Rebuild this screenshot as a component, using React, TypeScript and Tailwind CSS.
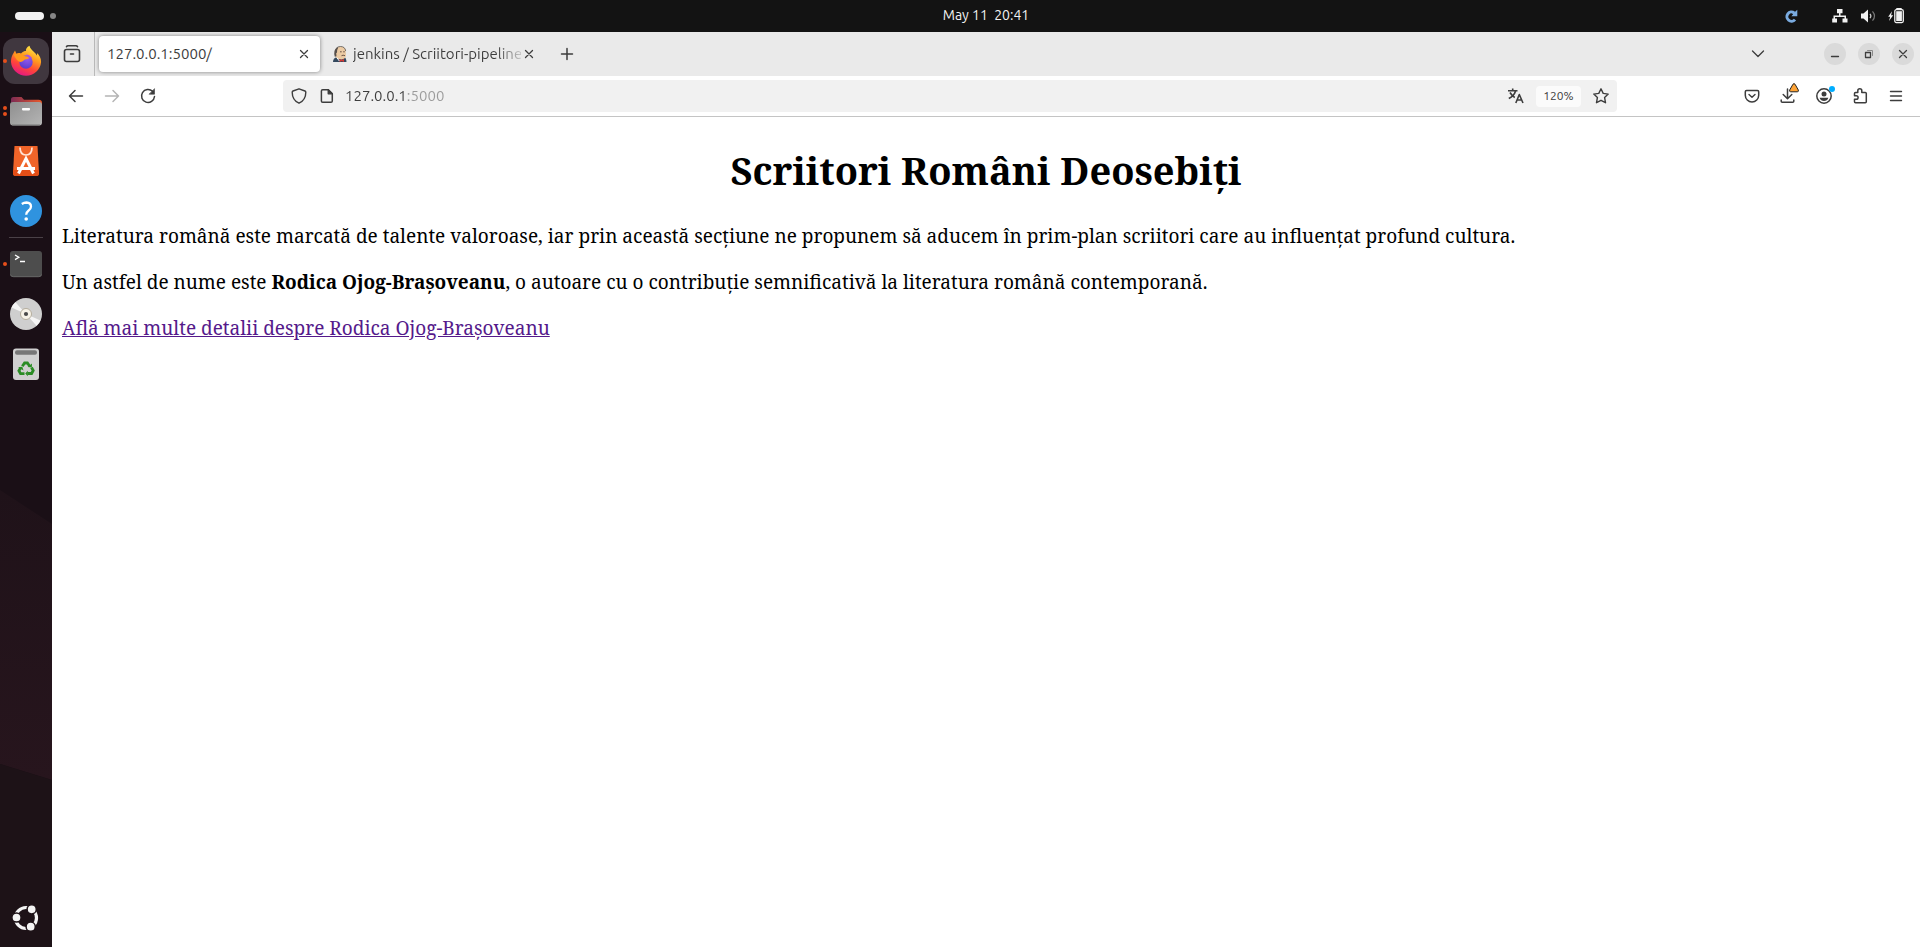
import type { ReactNode } from "react";

const stroke = {
  fill: "none",
  stroke: "currentColor",
  strokeWidth: 1.3,
  strokeLinecap: "round" as const,
  strokeLinejoin: "round" as const,
};

function Icon({ children }: { children: ReactNode }) {
  return (
    <svg viewBox="0 0 16 16" className="size-4 shrink-0" aria-hidden="true" {...stroke}>
      {children}
    </svg>
  );
}

function ToolButton({ label, children, muted = false }: { label: string; children: ReactNode; muted?: boolean }) {
  return (
    <button
      type="button"
      aria-label={label}
      disabled={muted}
      className="flex size-9 shrink-0 items-center justify-center rounded text-[#3d3d3d] disabled:text-[#b4b4b4]"
    >
      {children}
    </button>
  );
}

function TopBar() {
  return (
    <header className="grid h-8 shrink-0 grid-cols-3 items-center bg-[#131313] text-[#f2f2f2]">
      <button type="button" aria-label="Workspaces" className="ml-[15px] flex items-center gap-1.5 justify-self-start">
        <span className="h-2 w-[29px] rounded-full bg-[#f2f2f2]" />
        <span className="size-1.5 rounded-full bg-[#868686]" />
      </button>
      <time className="justify-self-center pb-0.5 pl-[52px] text-[14px] leading-5 whitespace-pre">May 11  20:41</time>
      <div className="flex items-center justify-end pr-4">
        <svg viewBox="0 0 16 16" className="mr-[33px] size-4" aria-hidden="true">
          <path d="M11.2 4.9A4.600 4.600 0 1 0 12 11.600" fill="none" stroke="#7aabe0" strokeWidth="3" />
          <path d="M14.300 1.700v6.600H8.400l1.700-2.100L8.900 4.400l2.900-.3z" fill="#7aabe0" />
        </svg>
        <svg viewBox="0 0 16 16" className="mr-3 size-4" fill="currentColor" aria-hidden="true">
          <path d="M5 1h5.500v4.200H8.500V7.500H14v3h1.500v4h-5v-4h2V9H3v1.500h2v4H.2v-4h1.300v-3H7V5.200H5z" />
        </svg>
        <svg viewBox="0 0 16 16" className="mr-3 size-4" aria-hidden="true">
          <path d="M1 5.500h2.500L8 1.600v12.800l-4.500-3.900H1z" fill="currentColor" />
          <path d="M10 5.800q1.800 2.200 0 4.400" fill="none" stroke="#c9c9c9" strokeWidth="1.2" />
          <path d="M12.500 3.300q4 4.700 0 9.400" fill="none" stroke="#777" strokeWidth="1.2" />
        </svg>
        <svg viewBox="0 0 16 16" className="size-4" aria-hidden="true">
          <path d="M4 3.200.2 8.700h2L1 13l4.200-5.700H3.100z" fill="currentColor" />
          <path d="M9 1.300V.5h4v.8" fill="none" stroke="currentColor" strokeWidth="1.4" />
          <rect x="6.800" y="1.700" width="8.500" height="12.900" rx="1.500" fill="none" stroke="currentColor" strokeWidth="1.3" />
          <rect x="8.200" y="3.200" width="5.700" height="9.900" fill="currentColor" />
        </svg>
      </div>
    </header>
  );
}

function DockItem({ label, dots = 0, active = false, children }: { label: string; dots?: number; active?: boolean; children: ReactNode }) {
  return (
    <div className="relative flex h-[50px] w-full items-center justify-center">
      <span className="absolute left-[3px] flex flex-col gap-0.5">
        {Array.from({ length: dots }, (_, i) => (
          <span key={i} className="size-1 rounded-full bg-[#e64f1b]" />
        ))}
      </span>
      <button
        type="button"
        aria-label={label}
        className={
          active
            ? "flex size-[46px] items-center justify-center rounded-xl bg-[#40373f]"
            : "flex size-[46px] items-center justify-center rounded-xl"
        }
      >
        <svg viewBox="0 0 32 32" className="size-8" aria-hidden="true">
          {children}
        </svg>
      </button>
    </div>
  );
}

function Dock() {
  return (
    <nav
      aria-label="Applications"
      className="relative flex w-[52px] shrink-0 flex-col items-center bg-[#1a0f16] pt-1"
    >
      <svg viewBox="0 0 52 915" preserveAspectRatio="none" className="absolute inset-0 size-full" aria-hidden="true">
        <defs>
          <linearGradient id="wall" x1="0" y1="0" x2="0" y2="1">
            <stop offset="0" stopColor="#1f1219" />
            <stop offset="1" stopColor="#27151d" />
          </linearGradient>
        </defs>
        <path d="M0 458 52 492V748L0 732z" fill="url(#wall)" />
        <path d="M0 732 52 748V915H0z" fill="#1d1217" />
      </svg>
      <DockItem label="Firefox" dots={1} active>
        <defs>
          <linearGradient id="fox" x1=".75" y1="0" x2=".3" y2="1">
            <stop offset="0" stopColor="#fff04a" />
            <stop offset=".38" stopColor="#ff9c1f" />
            <stop offset=".68" stopColor="#ff4638" />
            <stop offset="1" stopColor="#e31587" />
          </linearGradient>
          <radialGradient id="globe" cx=".6" cy=".2" r=".9">
            <stop offset="0" stopColor="#9a5cf0" />
            <stop offset="1" stopColor="#5339c9" />
          </radialGradient>
        </defs>
        <path
          d="M19.500.8c.4 2.600 2.400 4.200 4.500 6.200 1.400 1.400 2.400 2.400 2.700 3.500.6-.6.4-1.700.2-2.400 2.600 2.100 4.200 5.400 4.200 9A15.100 14.800 0 0 1 1 17c-.1-3 .7-5.600 1.700-7.500L5 5.500l1.400 3.200c1.600-.9 3.200-.6 4.600-.2 2-2.200 4.200-2.500 5-2.400-.6-1.600.9-4.200 3.500-5.300z"
          fill="url(#fox)"
        />
        <circle cx="16" cy="17" r="6.700" fill="url(#globe)" />
        <path d="M3.500 9.500c4-1.700 9-.2 12.300 2l4.200.2c-.8 2.400-3 2.300-5.200 2.900-1.500.9-1.700 2.200-4 2.300-3 .1-5.200-3.400-7.300-7.400z" fill="#ff9a1c" />
        <path d="M16 9.500c2.500 0 5 1.500 6.300 4.200-1.200-.8-2.200-1-3.300-.7z" fill="#a64de8" />
      </DockItem>
      <DockItem label="Files" dots={2}>
        <defs>
          <linearGradient id="tab" x1="0" y1="0" x2="1" y2="0">
            <stop offset="0" stopColor="#7b2a55" />
            <stop offset="1" stopColor="#e95a2b" />
          </linearGradient>
          <linearGradient id="files" x1="0" y1="0" x2="1" y2="1">
            <stop offset="0" stopColor="#8f8f8f" />
            <stop offset="1" stopColor="#b5b5b5" />
          </linearGradient>
        </defs>
        <path d="M1 4.500Q1 2 3.500 2h8l2.500 2.800h14.500Q32 4.800 32 8v8H.5z" fill="url(#tab)" />
        <rect y="7" width="32" height="23.500" rx="3" fill="url(#files)" />
        <path d="M2 30h28" stroke="#777" />
        <rect x="12" y="13" width="8" height="2.400" rx=".8" fill="#fff" />
      </DockItem>
      <DockItem label="App Center">
        <path d="M4.500 1h23l1.500 27q0 3-2.500 3h-21Q3 31 3 28z" fill="#f06429" />
        <path d="M3.200 25h25.600l.1 3q0 3-2.400 3h-21Q3 31 3 28z" fill="#e44e17" />
        <path d="M10 2.500q0 7.500 6 7.500t6-7.500" fill="none" stroke="#ffe3d6" strokeWidth="1.700" />
        <path d="m8.500 28.500 7.500-15 7.500 15M7 23.500h18" fill="none" stroke="#fff" strokeWidth="3" />
      </DockItem>
      <DockItem label="Help">
        <circle cx="16" cy="16" r="16" fill="#2f93df" />
        <path d="M11.800 9Q14 7.500 16.500 7.500q4.500.2 4.500 4 0 2.400-2.600 4.200-2.200 1.600-2.200 4" fill="none" stroke="#fff" strokeWidth="2.300" />
        <circle cx="16.200" cy="24" r="1.800" fill="#fff" />
      </DockItem>
      <hr className="relative my-px h-px w-[34px] border-0 bg-[#4a4147]" />
      <DockItem label="Terminal" dots={1}>
        <rect y="3" width="32" height="26" rx="3" fill="#4d4d4d" />
        <path d="M.5 26.500q.5 2.200 3 2.200h25q2.500 0 3-2.200" fill="none" stroke="#666" />
        <path d="m5 7 3.800 2.300L5 11.600M10 13.500h5" fill="none" stroke="#fff" strokeWidth="1.300" />
      </DockItem>
      <DockItem label="Disc">
        <circle cx="16" cy="16" r="16" fill="#cfcfcf" />
        <path d="M16 16 1.500 9.500A16 16 0 0 1 5.500 4.200zM16 16l14.500 6.500a16 16 0 0 1-4 5.300z" fill="#f5f5f5" />
        <circle cx="16" cy="16" r="5.500" fill="#f7f3e8" stroke="#aaa18e" strokeWidth=".8" />
        <circle cx="16" cy="16" r="2.100" fill="#4a4a4a" />
      </DockItem>
      <DockItem label="Trash">
        <rect x="3" y=".5" width="26" height="31.500" rx="3" fill="#d0d0d0" />
        <rect x="5" y="2.300" width="22" height="4.500" rx="2" fill="#777" />
        <g fill="none" stroke="#2a8c24" strokeWidth="2.800">
          <path d="m12.300 18.300 2.300-3.300h2.800l2.300 3.200" />
          <path d="m21.500 19.500 1.700 3-1.600 3h-4.100" />
          <path d="M14.500 25.600h-4L8.900 22.800l1.800-3.100" />
        </g>
        <path d="m17.600 18.900 4.200.5.200-4zM17.800 22.800v5.400l-2.600-2.700zM8 19.300l4.300-.6 1.200 3.800z" fill="#2a8c24" />
      </DockItem>
      <div className="mt-auto w-full pb-1">
        <DockItem label="Show Applications">
          <circle cx="16" cy="16" r="10.500" fill="none" stroke="#f4f4f4" strokeWidth="3.200" />
          <g fill="#f4f4f4" stroke="#1d1217" strokeWidth="1.500">
            <circle cx="21.700" cy="7.300" r="4.600" />
            <circle cx="6.500" cy="15.500" r="4.600" />
            <circle cx="20.700" cy="24.700" r="4.600" />
          </g>
        </DockItem>
      </div>
    </nav>
  );
}

function CloseGlyph() {
  return (
    <svg viewBox="0 0 16 16" className="size-4 shrink-0" aria-hidden="true" {...stroke}>
      <path d="m4.500 4.500 7 7m0-7-7 7" />
    </svg>
  );
}

function ButlerFavicon() {
  return (
    <svg viewBox="0 0 16 16" className="size-4 shrink-0" aria-hidden="true">
      <path d="M1 16q0-4 4-5l6-1q3.500 1.500 3.500 6z" fill="#34495e" />
      <path d="M3 10V5.500Q4 .7 8.500.7 13.300.7 13.800 5l.2 5q-1 3-4.500 3.500L5.500 13z" fill="#eccba4" />
      <path d="M2.800 10.800Q1 4 5 1.500L6.300 1.600Q4.800 4 5 6.500l-.8.8.3 3z" fill="#57504b" />
      <path d="M4.500 2Q6 .5 8.500.5q4.500 0 5.200 4.500" fill="none" stroke="#57504b" strokeWidth=".8" />
      <path d="M8 5.800h1.700m1.500 0h1.600M9.500 9.700q1.500-1 3.500 0" fill="none" stroke="#5a463c" strokeWidth=".9" />
      <path d="m7.500 13 2.200 1L12 13v3l-2.300-.9L7.500 16z" fill="#d33833" />
      <path d="m4.800 11.500 2.500 3.500" stroke="#fff" strokeWidth=".9" />
    </svg>
  );
}

function TabStrip() {
  return (
    <div className="flex h-11 items-center bg-[#eaeaea] pr-1.5 text-[#3d3d3d]">
      <div className="mr-1 flex h-full w-[43px] shrink-0 items-center justify-start border-r border-[#b9b9b9] pl-0.5">
        <button type="button" aria-label="Recent browsing" className="flex size-9 items-center justify-center">
          <svg viewBox="0 0 18 18" className="size-[18px]" aria-hidden="true" {...stroke} strokeWidth={1.600}>
            <path d="M3.500 1.700q.5-.9 1.500-.9h8q1 0 1.500.9" />
            <rect x="1.500" y="4.500" width="15" height="12" rx="2" />
            <path d="M7.500 9h3" />
          </svg>
        </button>
      </div>
      <div className="flex items-center" role="tablist">
        <div role="tab" aria-selected="true" className="flex h-9 w-[221px] items-center rounded bg-white px-2 shadow-[0_0_4px_rgba(0,0,0,0.45)]">
          <span className="flex-1 text-[15px] leading-5">127.0.0.1:5000/</span>
          <button type="button" aria-label="Close tab">
            <CloseGlyph />
          </button>
        </div>
        <div role="tab" aria-selected="false" className="flex h-9 w-[217px] items-center pl-3">
          <ButlerFavicon />
          <span className="ml-[5px] w-[168px] overflow-hidden bg-linear-to-r from-[#3d3d3d] from-85% to-[#3d3d3d]/20 bg-clip-text text-[15px] leading-5 whitespace-nowrap text-transparent">
            jenkins / Scriitori-pipeline
          </span>
          <button type="button" aria-label="Close tab">
            <CloseGlyph />
          </button>
        </div>
      </div>
      <button type="button" aria-label="New tab" className="ml-3 flex size-9 items-center justify-center">
        <Icon>
          <path d="M8 2.500v11M2.500 8h11" strokeWidth="1.500" />
        </Icon>
      </button>
      <div className="ml-auto flex items-center">
        <button type="button" aria-label="List all tabs" className="mr-12 flex size-9 items-center justify-center">
          <Icon>
            <path d="m2.500 5 5.500 5.500L13.500 5" />
          </Icon>
        </button>
        <div className="flex gap-3">
          <button type="button" aria-label="Minimize" className="flex size-[22px] items-center justify-center rounded-full bg-[#dadada]">
            <Icon>
              <path d="M4.500 10.500h7" />
            </Icon>
          </button>
          <button type="button" aria-label="Restore" className="flex size-[22px] items-center justify-center rounded-full bg-[#dadada]">
            <Icon>
              <path d="M4.500 6.500h5v5h-5z" />
              <path d="M6.500 4.500h5v5" stroke="#8a8a8a" strokeWidth="1" />
            </Icon>
          </button>
          <button type="button" aria-label="Close window" className="flex size-[22px] items-center justify-center rounded-full bg-[#dadada]">
            <CloseGlyph />
          </button>
        </div>
      </div>
    </div>
  );
}

function NavBar() {
  return (
    <div className="flex h-[41px] items-center border-b border-[#c4c4c4] bg-white px-1.5">
      <ToolButton label="Back">
        <Icon>
          <path d="M14.500 8h-13M7 2.500 1.500 8 7 13.500" strokeWidth="1.500" />
        </Icon>
      </ToolButton>
      <ToolButton label="Forward" muted>
        <Icon>
          <path d="M1.500 8h13M9 2.500 14.500 8 9 13.500" strokeWidth="1.500" />
        </Icon>
      </ToolButton>
      <ToolButton label="Reload">
        <Icon>
          <path d="M12.600 3.300A6.500 6.500 0 1 0 14.500 8.500" strokeWidth="1.500" />
          <path d="M14.500 1v5.200H9.400z" fill="currentColor" strokeWidth=".6" />
        </Icon>
      </ToolButton>
      <div className="mx-[117px] flex h-8 min-w-0 flex-1 items-center rounded bg-[#f1f1f1] px-2 text-[#3d3d3d]">
        <button type="button" aria-label="Tracking protection">
          <Icon>
            <path d="M8 .8 14 3q.8.3.8 1.200 0 7.800-6.800 11Q1.200 12 1.200 4.200 1.200 3.300 2 3z" strokeWidth="1.400" />
          </Icon>
        </button>
        <button type="button" aria-label="Site information" className="ml-3">
          <Icon>
            <path d="M3.700 1.700h5.600l4 4v7.300q0 1.300-1.300 1.300H3.700q-1.300 0-1.300-1.300V3q0-1.300 1.300-1.300z" strokeWidth="1.500" />
            <path d="M9.200 1.700v4.100h4.100z" fill="currentColor" />
          </Icon>
        </button>
        <input
          type="text"
          aria-label="Address"
          defaultValue="127.0.0.1:5000"
          className="ml-2.5 h-8 min-w-0 flex-1 bg-[linear-gradient(to_right,#3d3d3d_62px,#9b9b9b_62px)] bg-clip-text pb-0.5 text-[15px] leading-5 text-transparent outline-none"
        />
        <button type="button" aria-label="Translate page" className="mr-3">
          <Icon>
            <g strokeWidth="1.600" strokeLinecap="butt">
              <path d="M0 2.700h9.500M4.700.5v2.200M7.700 2.700Q6 8 .8 10.500M2 4.500q2 3.500 4.800 5" />
              <path d="m7.800 15 3.500-8.500L15 15M9 12h4.800" />
            </g>
          </Icon>
        </button>
        <button type="button" className="h-[21px] w-[45px] rounded bg-[#fbfbfb] text-center text-[12px] leading-5">
          120%
        </button>
        <button type="button" aria-label="Bookmark" className="ml-3">
          <Icon>
            <path d="m8 .8 2.200 4.600 5 .7-3.600 3.500.9 5.100L8 12.300l-4.500 2.400.9-5.100L.8 6.100l5-.7z" strokeWidth="1.400" />
          </Icon>
        </button>
      </div>
      <ToolButton label="Pocket">
        <Icon>
          <path d="M2.500 2.500h11q1.200 0 1.200 1.200v3.500a6.700 6.700 0 0 1-13.400 0V3.700q0-1.200 1.200-1.200z" strokeWidth="1.500" />
          <path d="M5 6.500 8 9.300l3-2.800" strokeWidth="1.400" />
        </Icon>
      </ToolButton>
      <ToolButton label="Downloads">
        <span className="relative">
          <Icon>
            <path d="M7.500 1v9.500M3.200 6.500l4.300 4.200 4.300-4.200M1.200 12v1.300q0 1 1 1h10.600q1 0 1-1V12" strokeWidth="1.500" />
          </Icon>
          <svg viewBox="0 0 10 10" className="absolute -top-[5px] left-[9px] size-2.5" aria-hidden="true">
            <path d="M4 1.200q1-1.200 2 0L9.300 7q.5 1.800-1 1.800H1.700Q.2 8.800.7 7z" fill="#ffa436" stroke="#222" strokeWidth="1" />
          </svg>
        </span>
      </ToolButton>
      <ToolButton label="Account">
        <span className="relative">
          <Icon>
            <circle cx="8" cy="8" r="7.200" strokeWidth="1.500" />
            <circle cx="8" cy="6" r="2.500" fill="currentColor" stroke="none" />
            <path d="M3.600 9.700h8.800Q11.200 13 8 13T3.600 9.700z" fill="currentColor" stroke="none" />
          </Icon>
          <span className="absolute -top-0.5 -right-[3px] size-1.5 rounded-full bg-[#00adff]" />
        </span>
      </ToolButton>
      <ToolButton label="Extensions">
        <Icon>
          <path
            d="M5.800 4.600V2.800a2 2 0 0 1 4 0v1.800h3.500q1 0 1 1v8.200q0 1-1 1H3.500q-1 0-1-1v-2.500h1.800a1.800 1.800 0 0 0 0-3.600H2.500V5.600q0-1 1-1z"
            strokeWidth="1.500"
          />
        </Icon>
      </ToolButton>
      <ToolButton label="Menu">
        <Icon>
          <path d="M2.500 3.500h11M2.500 8h11M2.500 12.500h11" strokeWidth="1.400" />
        </Icon>
      </ToolButton>
    </div>
  );
}

export default function App() {
  return (
    <div className="flex min-h-screen flex-col bg-white font-['Ubuntu','Noto_Sans',sans-serif]">
      <TopBar />
      <div className="flex flex-1">
        <Dock />
        <div className="flex min-w-0 flex-1 flex-col">
          <TabStrip />
          <NavBar />
          <main className="flex flex-col gap-5 px-2.5 pt-[27px] font-['Noto_Serif','Liberation_Serif',serif] text-[19px] leading-[26px] text-black">
            <h1 className="mb-[7px] text-center text-[38px] leading-[52px] font-bold">Scriitori Români Deosebiți</h1>
            <p>
              Literatura română este marcată de talente valoroase, iar prin această secțiune ne propunem să aducem în
              prim-plan scriitori care au influențat profund cultura.
            </p>
            <p>
              Un astfel de nume este <strong>Rodica Ojog-Brașoveanu</strong>, o autoare cu o contribuție semnificativă la
              literatura română contemporană.
            </p>
            <p>
              <a href="#rodica-ojog-brasoveanu" className="text-[#551a8b] underline">
                Află mai multe detalii despre Rodica Ojog-Brașoveanu
              </a>
            </p>
          </main>
        </div>
      </div>
    </div>
  );
}
